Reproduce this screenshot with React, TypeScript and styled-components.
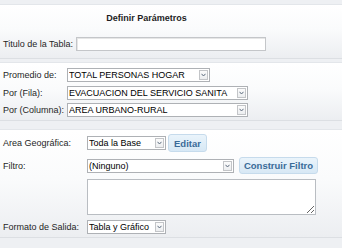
import React from 'react';
import styled, {createGlobalStyle} from 'styled-components';

const GlobalStyle = createGlobalStyle`
    html, body {
        margin: 0;
        padding: 0;
        background: #eef0f3;
    }
    body {
        width: 342px;
        height: 248px;
        overflow: hidden;
        font-family: "Liberation Sans", Arial, sans-serif;
    }
`;

const Panel = styled.section<{ $gap: number; $padTop: number; $padBottom: number }>`
    margin-top: ${(p) => p.$gap}px;
    padding: ${(p) => p.$padTop}px 0 ${(p) => p.$padBottom}px 3px;
    background: linear-gradient(#ffffff 0%, #fafbfc 45%, #eceef1 100%);
    border-top: 1px solid ${(p) => (p.$gap > 0 ? '#e3e6ea' : 'transparent')};
    border-bottom: 1px solid #dcdfe3;
`;

const Heading = styled.div`
    width: 287px;
    height: 12px;
    line-height: 12px;
    text-align: center;
    font-size: 9px;
    font-weight: bold;
    color: #1e1e1e;
    margin-bottom: 13px;
`;

const Rows = styled.div<{ $label: number; $gap: number }>`
    display: grid;
    grid-template-columns: ${(p) => p.$label}px auto;
    row-gap: ${(p) => p.$gap}px;
    align-items: center;
    justify-items: start;
`;

const Label = styled.span`
    font-size: 9px;
    color: #1f1f1f;
    white-space: nowrap;
`;

const Field = styled.div<{ $gap?: number }>`
    display: flex;
    align-items: center;
    gap: ${(p) => p.$gap ?? 0}px;
`;

const TextInput = styled.input`
    box-sizing: border-box;
    width: 190px;
    height: 14px;
    margin: 0;
    padding: 0 2px;
    border: 1px solid #c4c6c9;
    box-shadow: inset 1px 1px 0 #e6e6e6;
    background: #fff;
    font: 9px "Liberation Sans", Arial, sans-serif;
`;

const SelectWrap = styled.label<{ $width: number }>`
    box-sizing: border-box;
    display: flex;
    align-items: center;
    width: ${(p) => p.$width}px;
    height: 14px;
    padding-right: 1px;
    border: 1px solid #aeb1b5;
    background: #fff;
`;

const NativeSelect = styled.select`
    flex: 1;
    min-width: 0;
    height: 12px;
    margin: 0;
    padding: 0 0 0 1px;
    border: none;
    outline: none;
    appearance: none;
    background: transparent;
    font: 9px "Liberation Sans", Arial, sans-serif;
    line-height: 12px;
    color: #000;
`;

const ArrowBox = styled.span`
    box-sizing: border-box;
    display: flex;
    align-items: center;
    justify-content: center;
    width: 9px;
    height: 10px;
    border: 1px solid #c3c5c8;
    background: linear-gradient(#fbfbfb, #eceef0);
`;

const Button = styled.button<{ $width: number; $height: number }>`
    box-sizing: border-box;
    width: ${(p) => p.$width}px;
    height: ${(p) => p.$height}px;
    margin: 0;
    padding: 0;
    border: 1px solid #c6dbec;
    border-radius: 3px;
    background: linear-gradient(#eaf4fb, #d7e8f5);
    color: #3a6b98;
    font: bold 9.5px "Liberation Sans", Arial, sans-serif;
    cursor: pointer;
`;

const Notes = styled.textarea`
    box-sizing: border-box;
    display: block;
    width: 229px;
    height: 36px;
    margin: 0;
    border: 1px solid #b9bdc2;
    background: #fff;
    resize: both;
    font: 9px "Liberation Sans", Arial, sans-serif;
`;

const Chevron = () => (
    <svg width="5" height="4" viewBox="0 0 5 4">
        <path d="M0.5 0.8 L2.5 3 L4.5 0.8" fill="none" stroke="#5d6b7d" strokeWidth="1"/>
    </svg>
);

const Select: React.FC<{ width: number; value: string }> = ({width, value}) => (
    <SelectWrap $width={width}>
        <NativeSelect defaultValue={value}>
            <option value={value}>{value}</option>
        </NativeSelect>
        <ArrowBox><Chevron/></ArrowBox>
    </SelectWrap>
);

const App: React.FC = () => {
    return (
        <>
            <GlobalStyle/>
            <Panel $gap={4} $padTop={7} $padBottom={7}>
                <Heading>Definir Parámetros</Heading>
                <Rows $label={73} $gap={0}>
                    <Label>Titulo de la Tabla:</Label>
                    <TextInput type="text"/>
                </Rows>
            </Panel>

            <Panel $gap={3} $padTop={5} $padBottom={3}>
                <Rows $label={64} $gap={3.5}>
                    <Label>Promedio de:</Label>
                    <Select width={143} value="TOTAL PERSONAS HOGAR"/>
                    <Label>Por (Fila):</Label>
                    <Select width={181} value="EVACUACION DEL SERVICIO SANITA"/>
                    <Label>Por (Columna):</Label>
                    <Select width={181} value="AREA URBANO-RURAL"/>
                </Rows>
            </Panel>

            <Panel $gap={8} $padTop={4} $padBottom={3}>
                <Rows $label={84} $gap={5}>
                    <Label>Area Geográfica:</Label>
                    <Field $gap={2}>
                        <Select width={79} value="Toda la Base"/>
                        <Button $width={39} $height={18}>Editar</Button>
                    </Field>
                    <Label>Filtro:</Label>
                    <Field $gap={5}>
                        <Select width={147} value="(Ninguno)"/>
                        <Button $width={79} $height={17}>Construir Filtro</Button>
                    </Field>
                    <span/>
                    <Notes/>
                    <Label>Formato de Salida:</Label>
                    <Select width={79} value="Tabla y Gráfico"/>
                </Rows>
            </Panel>
        </>
    );
};

export default App;
